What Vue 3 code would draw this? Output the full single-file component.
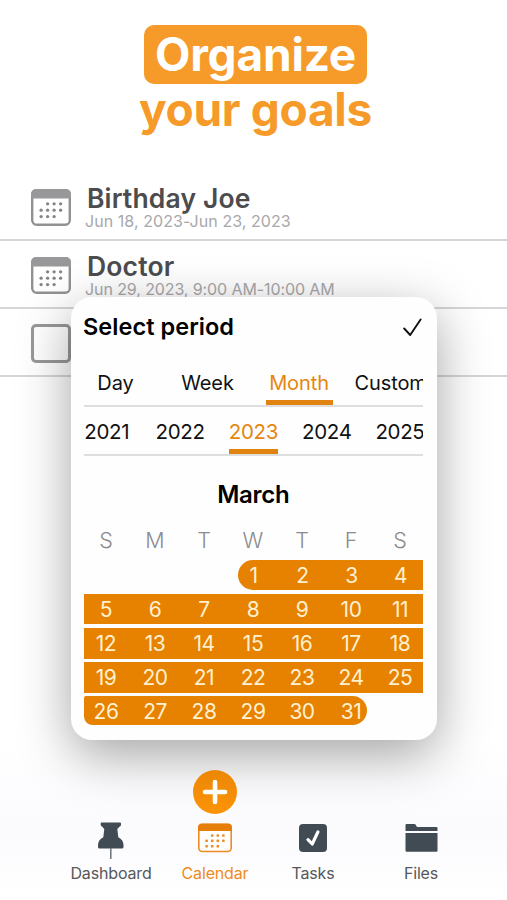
<script setup>
const events = [
  { title: 'Birthday Joe', date: 'Jun 18, 2023-Jun 23, 2023', kind: 'a' },
  { title: 'Doctor', date: 'Jun 29, 2023, 9:00 AM-10:00 AM', kind: 'b' },
]
const periods = ['Day', 'Week', 'Month', 'Custom']
const years = [2021, 2022, 2023, 2024, 2025]
const weekdays = ['S', 'M', 'T', 'W', 'T', 'F', 'S']
const weeks = [
  [1, 2, 3, 4],
  [5, 6, 7, 8, 9, 10, 11],
  [12, 13, 14, 15, 16, 17, 18],
  [19, 20, 21, 22, 23, 24, 25],
  [26, 27, 28, 29, 30, 31],
]
const dots = [
  [16, 14.8], [22.5, 14.8], [29, 14.8],
  [9.5, 21.2], [16, 21.2], [22.5, 21.2], [29, 21.2],
  [9.5, 27.6], [16, 27.6], [22.5, 27.6],
]
</script>

<template>
  <main class="screen">
    <header class="hero">
      <div class="pill"><span>Organize</span></div>
      <div class="sub">your goals</div>
    </header>

    <section class="events">
      <article v-for="e in events" :key="e.title" class="event">
        <svg class="event-icon" viewBox="0 0 40 37">
          <rect x="1.2" y="1.2" width="37.6" height="34.6" rx="4.5" fill="#fff" stroke="#929294" stroke-width="2.4" />
          <path d="M0 9.5V5.5Q0 0 5.500 0h29Q40 0 40 5.500v4z" fill="#98989a" />
          <circle v-for="(d, i) in dots" :key="i" :cx="d[0] + 0.6" :cy="d[1]" r="1.65" fill="#858588" />
        </svg>
        <div class="event-text">
          <h2>{{ e.title }}</h2>
          <p :class="'date-' + e.kind">{{ e.date }}</p>
        </div>
      </article>
      <article class="event"><span class="box"></span></article>
    </section>

    <footer class="bottom">
      <nav class="nav">
        <a class="item dashboard">
          <svg width="26" height="40" viewBox="0 0 26 40">
            <path d="M3.500 .5h18.500q1 0 1 1v1.600q0 1-1 1.200l-2.700 2.700 1 8.300q5.200 2.600 5.200 8.200v1.500q0 1.500-1.500 1.500H1.500Q0 26.500 0 25V23.500q0-5.600 5.300-8.200l1-8.300-2.600-2.700q-1-.2-1-1.200V1.500q0-1 .8-1z" fill="#414b53" />
            <path d="M12.800 26v11" stroke="#68727a" stroke-width="1.500" />
          </svg>
          <span>Dashboard</span>
        </a>
        <a class="item calendar">
          <svg width="34" height="40" viewBox="0 0 34 40">
            <rect x=".8" y="2.500" width="32.400" height="27" rx="3.500" fill="#fff" stroke="#ee8c21" stroke-width="1.600" />
            <path d="M0 9V5.500Q0 1.500 4 1.500h26q4 0 4 4V9z" fill="#e57f0a" />
            <g fill="#ee8b20">
              <rect v-for="(d, i) in dots" :key="i" :x="d[0] * .86 - .8" :y="d[1] * .84 - .2" width="2.500" height="2.500" rx=".6" />
            </g>
          </svg>
          <span>Calendar</span>
        </a>
        <a class="item tasks">
          <svg width="28" height="40" viewBox="0 0 28 40">
            <rect y="2" width="28" height="28" rx="4" fill="#414b53" />
            <path d="M9 17.700l4.200 4.300 5.700-12" fill="none" stroke="#fff" stroke-width="3.200" stroke-linecap="round" stroke-linejoin="round" />
          </svg>
          <span>Tasks</span>
        </a>
        <a class="item files">
          <svg width="33" height="40" viewBox="0 0 33 40">
            <path d="M.5 9V3q0-1 1-1h8q.8 0 1.200.8l1.300 2.200h19.500q1 0 1 1v3zM.5 11h32v17.800q0 1-1 1h-30q-1 0-1-1z" fill="#414b53" />
          </svg>
          <span>Files</span>
        </a>
      </nav>
    </footer>

    <section class="modal">
      <div class="modal-head">
        <h1>Select period</h1>
        <svg width="19" height="19" viewBox="0 0 19 19"><path d="M1.200 10.500l6 6.500L17.600 1.500" fill="none" stroke="#111" stroke-width="1.900" stroke-linecap="round" stroke-linejoin="round" /></svg>
      </div>
      <div class="tabs">
        <div v-for="p in periods" :key="p" :class="['tab', 'tab-' + p.toLowerCase(), { active: p === 'Month' }]">{{ p }}</div>
      </div>
      <div class="years">
        <div v-for="y in years" :key="y" :class="['year', { active: y === 2023 }]">{{ y }}</div>
      </div>
      <h3>March</h3>
      <div class="weekdays"><span v-for="(d, i) in weekdays" :key="i">{{ d }}</span></div>
      <div class="weeks">
        <div v-for="(w, i) in weeks" :key="i" :class="['week', { first: i === 0, last: i === 4 }]">
          <span v-for="d in w" :key="d">{{ d }}</span>
        </div>
      </div>
    </section>

    <button class="add" aria-label="Add">
      <svg viewBox="0 0 44 44"><path d="M22 12v20M12 22h20" stroke="#fff" stroke-width="4.600" stroke-linecap="round" /></svg>
    </button>
  </main>
</template>

<style>
body { margin: 0; background: #fff; }
</style>

<style scoped>
* { box-sizing: border-box; }
h1, h2, h3, p { margin: 0; }
svg { display: block; }
.screen {
  position: relative;
  width: 507px;
  height: 900px;
  overflow: hidden;
  display: flex;
  flex-direction: column;
  background: linear-gradient(#fff 0, #fff 740px, #fbfbfe 830px, #fff 900px);
  font-family: Inter, "Liberation Sans", sans-serif;
  white-space: nowrap;
}
.hero {
  height: 172.500px;
  padding-top: 25px;
  display: flex;
  flex-direction: column;
  align-items: center;
  font-weight: 700;
  font-size: 46px;
  color: #f69a29;
}
.pill {
  width: 223px;
  height: 59px;
  margin-left: 4px;
  border-radius: 10px;
  background: #f69a29;
  color: #fff;
  display: flex;
  justify-content: center;
  line-height: 58px;
  letter-spacing: -0.2px;
}
.sub { line-height: 50px; margin-left: 4px; letter-spacing: -0.3px; }
.event {
  height: 68.200px;
  padding-left: 31px;
  display: flex;
  border-bottom: 2px solid #d6d6d8;
}
.event-icon { width: 40px; height: 37px; margin-top: 16px; }
.event-text { padding: 10px 0 0 15px; }
h2 { font-size: 26.500px; line-height: 31px; font-weight: 600; color: #4c4c4e; letter-spacing: 0.150px; padding-left: 1px; }
p { font-size: 16px; line-height: 16px; color: #a8a8aa; margin-top: -0.500px; margin-left: -1px; }
.date-a { letter-spacing: 0.060px; }
.date-b { letter-spacing: -0.100px; }
.box { width: 40px; height: 39px; margin-top: 15px; border: 3px solid #98989a; border-radius: 5px; }
.bottom { margin-top: auto; height: 86px; }
.add {
  position: absolute;
  left: 193px;
  top: 769.500px;
  width: 44px;
  height: 44px;
  padding: 0;
  border: 0;
  border-radius: 50%;
  background: linear-gradient(#ec8706, #fc9408);
}
.nav { display: flex; padding: 8px 0 0 61px; }
.item {
  display: flex;
  flex-direction: column;
  align-items: center;
  color: #55575a;
  font-size: 16px;
  line-height: 22px;
  letter-spacing: -0.150px;
  width: 100px;
}
.item svg { flex: none; }
.item.calendar { width: 108px; color: #ee8b20; }
.item.tasks { width: 88px; }
.item.files { width: 128px; }
.modal {
  position: absolute;
  left: 70.500px;
  top: 296.500px;
  width: 366.500px;
  height: 443px;
  padding: 0 14px 0 13px;
  border-radius: 21px;
  background: #fefefe;
  box-shadow: 0 15px 52px rgba(0, 0, 0, 0.36);
  color: #111;
}
.modal-head { height: 61px; display: flex; align-items: center; justify-content: space-between; }
h1 { font-size: 23.500px; font-weight: 600; line-height: 30px; letter-spacing: 0.050px; margin-left: -0.500px; color: #000; }
.modal-head svg { margin-right: 1px; }
.tabs, .years { display: flex; overflow: hidden; border-bottom: 2px solid #dedede; }
.tabs { height: 49.500px; font-size: 20px; }
.tab { flex: none; text-align: center; line-height: 50px; letter-spacing: -0.100px; }
.tab-day { width: 64px; }
.tab-week { width: 94px; margin-left: 13px; }
.tab-month { width: 67px; margin-left: 11px; }
.tab-custom { margin-left: 22px; }
.active { color: #e5860f; box-shadow: inset 0 -5px #e08310; }
.years { height: 49px; font-size: 20.500px; }
.year { flex: none; width: 49px; margin-right: 24.300px; line-height: 50px; text-align: center; letter-spacing: -0.350px; }
.year:first-child { margin-left: -1.300px; }
h3 { height: 78px; line-height: 78px; text-align: center; font-size: 24px; font-weight: 600; color: #000; letter-spacing: -0.3px; }
.weekdays { height: 25.500px; line-height: 13px; display: grid; grid-template-columns: repeat(7, 49px); margin-left: -2px; text-align: center; font-size: 21.500px; font-weight: 300; color: #8b8b8d; }
.weeks { display: flex; flex-direction: column; gap: 3.400px; }
.week { display: flex; width: 339px; height: 30.800px; line-height: 31px; background: #e68200; color: #fff0d0; font-size: 21px; letter-spacing: -0.500px; overflow: hidden; }
.week span { width: 49px; flex: none; text-align: center; }
.week span:first-child { margin-left: -2px; }
.week.first { align-self: flex-end; width: 185px; border-radius: 16px 0 0 16px; }
.week.first span:first-child { margin-left: -9px; }
.week.last { width: 283px; height: 29px; border-radius: 2px 15px 15px 9px; }
</style>
